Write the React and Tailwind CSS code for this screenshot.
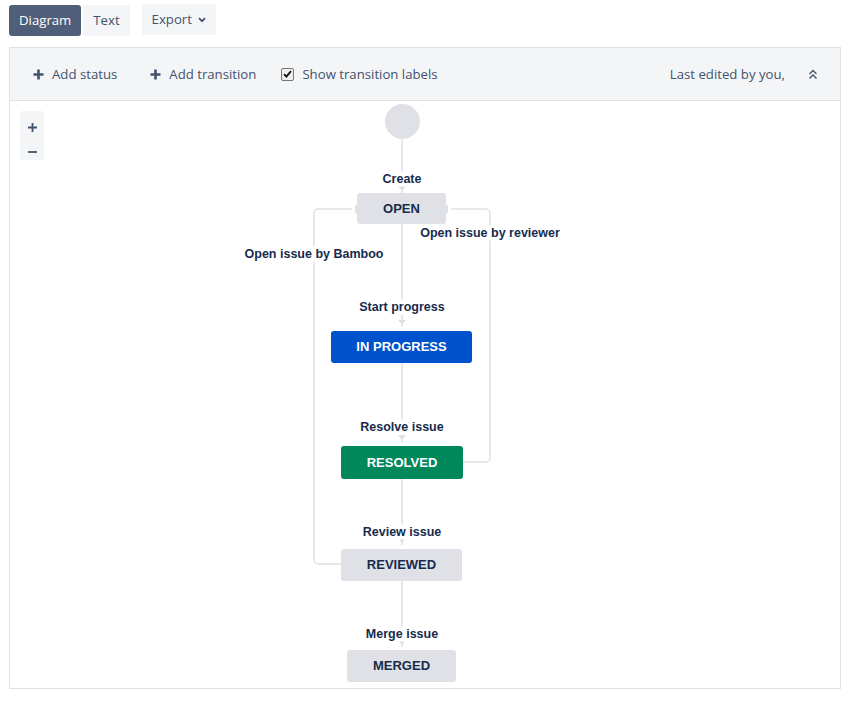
import React, { useState } from "react";

const PlusIcon = () => (
  <svg width="11" height="11" viewBox="0 0 11 11" className="shrink-0">
    <path d="M5.5 0.5v10M0.5 5.5h10" stroke="#42526e" strokeWidth="2.6" />
  </svg>
);

const nodes = [
  { id: "open", label: "OPEN", left: 347, top: 92, w: 89, h: 31, cls: "bg-[#dfe1e6] text-[#172b4d]" },
  { id: "progress", label: "IN PROGRESS", left: 321, top: 230, w: 141, h: 32, cls: "bg-[#0052cc] text-white" },
  { id: "resolved", label: "RESOLVED", left: 331, top: 345, w: 122, h: 33, cls: "bg-[#00875a] text-white" },
  { id: "reviewed", label: "REVIEWED", left: 331, top: 448, w: 121, h: 32, cls: "bg-[#dfe1e6] text-[#172b4d]" },
  { id: "merged", label: "MERGED", left: 337, top: 549, w: 109, h: 32, cls: "bg-[#dfe1e6] text-[#172b4d]" },
];

const labels = [
  { text: "Create", x: 392, y: 78 },
  { text: "Start progress", x: 392, y: 206 },
  { text: "Resolve issue", x: 392, y: 326 },
  { text: "Review issue", x: 392, y: 431 },
  { text: "Merge issue", x: 392, y: 533 },
  { text: "Open issue by reviewer", x: 480, y: 132 },
  { text: "Open issue by Bamboo", x: 304, y: 153 },
];

// small downward arrow heads just above each status
const downArrows = [90, 224, 339, 442, 544];

const Diagram = () => (
  <div className="relative h-[587px] bg-white overflow-hidden font-['Liberation_Sans',Arial,sans-serif]">
    {/* zoom controls */}
    <div className="absolute left-[10px] top-[10px] w-[24px] h-[49px] bg-[#f4f5f7] rounded-[3px] flex flex-col items-center text-[#42526e]">
      <svg width="9" height="9" viewBox="0 0 9 9" className="mt-[12px]">
        <path d="M4.5 0v9M0 4.5h9" stroke="#42526e" strokeWidth="1.8" />
      </svg>
      <svg width="9" height="2" viewBox="0 0 9 2" className="mt-[19px]">
        <path d="M0 1h9" stroke="#42526e" strokeWidth="1.8" />
      </svg>
    </div>

    {/* edges */}
    <svg className="absolute left-0 top-0" width="830" height="587">
      <g stroke="#dfe1e6" strokeWidth="1.5" fill="none">
        <path d="M392 38V92" />
        <path d="M392 123V226" />
        <path d="M392 262V341" />
        <path d="M392 378V444" />
        <path d="M392 480V546" />
        <path d="M331 463H308a4 4 0 0 1-4-4V112a4 4 0 0 1 4-4H342" />
        <path d="M453 361H476a4 4 0 0 0 4-4V112a4 4 0 0 0-4-4H441" />
      </g>
      <g fill="#dfe1e6">
        {downArrows.map((y) => (
          <path key={y} d={`M388 ${y - 5}h8l-4 5z`} />
        ))}
        <path d="M345 103l6 5-6 5z" />
        <path d="M438 103l-6 5 6 5z" />
      </g>
    </svg>

    {/* start circle */}
    <div className="absolute left-[375px] top-[3px] w-[35px] h-[35px] rounded-full bg-[#dfe1e6]" />

    {labels.map((l) => (
      <div
        key={l.text}
        className="absolute -translate-x-1/2 -translate-y-1/2 bg-white px-[1px] text-[12.5px] leading-[15px] font-bold text-[#172b4d] whitespace-nowrap"
        style={{ left: l.x, top: l.y }}
      >
        {l.text}
      </div>
    ))}

    {nodes.map((n) => (
      <div
        key={n.id}
        className={`absolute rounded-[3px] flex items-center justify-center text-[13px] font-bold ${n.cls}`}
        style={{ left: n.left, top: n.top, width: n.w, height: n.h }}
      >
        {n.label}
      </div>
    ))}
  </div>
);

export default function App() {
  const [view, setView] = useState("diagram");

  return (
    <div className="w-[848px] h-[701px] bg-white pt-[5px] pl-[9px] font-['Segoe_UI','Open_Sans',sans-serif] text-[#42526e]">
      {/* top tabs */}
      <div className="flex items-center h-[31px] text-[13.2px]">
        <button
          onClick={() => setView("diagram")}
          className={`h-[31px] px-[10px] rounded-[3px] ${
            view === "diagram" ? "bg-[#505f79] text-white" : "bg-[#f4f5f7] text-[#42526e]"
          }`}
        >
          Diagram
        </button>
        <button
          onClick={() => setView("text")}
          className={`ml-[2px] h-[31px] px-[10px] rounded-[3px] ${
            view === "text" ? "bg-[#505f79] text-white" : "bg-[#f4f5f7] text-[#42526e]"
          }`}
        >
          Text
        </button>
        <button className="ml-[12px] h-[31px] px-[10px] rounded-[3px] bg-[#f4f5f7] text-[#42526e] flex items-center gap-[6px] -translate-y-[1px]">
          Export
          <svg width="8" height="6" viewBox="0 0 8 6">
            <path d="M1 1.2l3 3 3-3" stroke="#42526e" strokeWidth="1.7" fill="none" />
          </svg>
        </button>
      </div>

      {/* panel */}
      <div className="mt-[11px] w-[832px] border border-[#dfe1e6]">
        <div className="h-[53px] bg-[#f4f5f7] border-b border-[#dfe1e6] flex items-center text-[13.2px] pl-[23px] pr-[22px] pt-[1px]">
          <button className="flex items-center gap-[8px]">
            <PlusIcon />
            Add status
          </button>
          <button className="flex items-center gap-[8px] ml-[33px]">
            <PlusIcon />
            Add transition
          </button>
          <label className="flex items-center ml-[25px]">
            <span className="w-[13px] h-[13px] border border-[#767676] rounded-[2px] bg-[#efefef] flex items-center justify-center">
              <svg width="9" height="8" viewBox="0 0 9 8">
                <path d="M1 4.2l2.4 2.4L8 1.2" stroke="#111" strokeWidth="1.8" fill="none" />
              </svg>
            </span>
            <span className="ml-[8px]">Show transition labels</span>
          </label>
          <span className="ml-auto">Last edited by you,</span>
          <svg width="10" height="11" viewBox="0 0 10 11" className="ml-[23px]">
            <path d="M1.5 5l3.5-3.5L8.5 5M1.5 9.5L5 6l3.5 3.5" stroke="#42526e" strokeWidth="1.4" fill="none" />
          </svg>
        </div>
        <Diagram />
      </div>
    </div>
  );
}
